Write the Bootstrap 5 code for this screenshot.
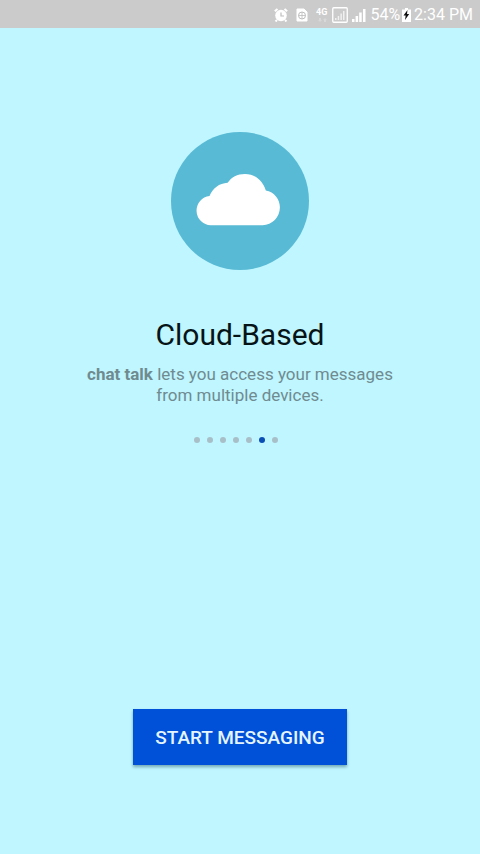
<!DOCTYPE html>
<html lang="en">
<head>
<meta charset="utf-8">
<meta name="viewport" content="width=device-width, initial-scale=1">
<title>Cloud-Based</title>
<link href="https://cdn.jsdelivr.net/npm/bootstrap@5.3.0/dist/css/bootstrap.min.css" rel="stylesheet">
<style>
body { background: #bff6ff; font-family: Roboto, "Liberation Sans", sans-serif; }
.status-bar { background: #cbcbcb; color: #fff; height: 28px; padding: 2px 7px 0 0; font-size: 16px; line-height: 26px; }
.status-bar svg { display: block; }
.battery { margin: 0 3px 0 2px; }
.intro { padding-top: 104px; }
.cloud-art { width: 138px; height: 138px; }
.intro-title { margin-top: 47px; font-size: 30px; line-height: 36px; color: #071417; }
.intro-text { margin-top: 11px; font-size: 17px; line-height: 21px; color: #6f8b90; max-width: 330px; }
.intro-text strong { font-weight: 700; }
.pager { margin-top: 31px; }
.pager-dot { width: 6px; height: 6px; margin-right: 7px; border-radius: 50%; background: #a9bfc8; }
.pager-dot.current { background: #0a4db5; }
.start-area { padding-bottom: 89px; }
.start-btn, .start-btn:hover { background: #0050d8; color: #e4f5ff; border: 0; border-radius: 0; padding: 17px 22px 15px; font-size: 19px; line-height: 24px; font-weight: 500; box-shadow: 0 2px 3px rgba(0, 50, 70, .4); }
</style>
</head>
<body>
<div class="min-vh-100 d-flex flex-column">
  <header class="status-bar d-flex align-items-center justify-content-end">
    <svg class="me-2" width="14" height="14" viewBox="0 0 14 14" fill="none" aria-hidden="true">
      <circle cx="7" cy="7.500" r="5.800" fill="#fff"/>
      <path d="M.8 3.300 3.500 1M10.500 1l2.700 2.300M3 12l-1.500 1.500M11 12l1.500 1.500" stroke="#fff" stroke-width="2"/>
      <path d="M7 4.500v3.500h3" stroke="#bdbdbd" stroke-width="1.200"/>
    </svg>
    <svg class="me-2" width="12" height="14" viewBox="0 0 12 14" fill="none" aria-hidden="true">
      <path d="M1 1h7l3 3v9H1z" fill="#fff" stroke="#fff" stroke-linejoin="round"/>
      <circle cx="6" cy="7.500" r="3.500" stroke="#bdbdbd"/>
      <path d="M2.500 7.500h7M6 4v7" stroke="#bdbdbd" stroke-width=".8"/>
    </svg>
    <svg class="me-1" width="12" height="16" viewBox="0 0 12 16" aria-hidden="true">
      <text x="0" y="8" font-size="9" font-weight="700" fill="#fff">4G</text>
      <path d="M3 11h2v2h1l-2 2-2-2h1zM8 15h2v-2h1l-2-2-2 2h1z" fill="#d8d8d8"/>
    </svg>
    <svg class="me-1" width="16" height="16" viewBox="0 0 16 16" aria-hidden="true">
      <rect x=".75" y=".75" width="14.500" height="14.500" rx="1" fill="none" stroke="#fff" stroke-width="1.300"/>
      <path d="M3 11h1.500v2H3zM5.700 9h1.500v4H5.700zM8.400 6.500h1.500V13H8.400zM11 4h1.500v9H11z" fill="#f0f0f0"/>
    </svg>
    <svg class="me-1" width="14" height="14" viewBox="0 0 14 14" aria-hidden="true">
      <path d="M0 11h2.500v3H0zM3.600 8h2.500v6H3.600zM7.200 4.500h2.500V14H7.200zM11 1h2.500v13H11z" fill="#fff"/>
    </svg>
    <span>54%</span>
    <svg class="battery" width="9" height="14" viewBox="0 0 9 14" aria-hidden="true">
      <path d="M3 0h3v1.500h3V14H0V1.500h3z" fill="#fff"/>
      <path d="M5.500 2 1.500 7.500h2.200L3 12l4.200-6H5z" fill="#111"/>
    </svg>
    <time>2:34 PM</time>
  </header>

  <main class="flex-grow-1 d-flex flex-column align-items-center text-center">
    <section class="intro d-flex flex-column align-items-center">
      <svg class="cloud-art" viewBox="0 0 139 139" aria-hidden="true">
        <circle cx="69.500" cy="69.500" r="69.500" fill="#58bad4"/>
        <path d="M40 93.800a14.700 14.700 0 0 1-1.200-29.300c3.200-7.800 9.700-12.800 18.200-13.300 3.800-5.800 9.800-9 17.500-9 10.200 0 18 6.700 21 16.600 8.500 1.500 14.200 8.700 14.200 17 0 10-7.800 18-17.500 18z" fill="#fff"/>
      </svg>
      <h1 class="intro-title fw-normal mb-0">Cloud-Based</h1>
      <p class="intro-text mb-0"><strong>chat talk</strong> lets you access your messages<br>from multiple devices.</p>
      <div class="pager d-flex" role="img" aria-label="Page 6 of 7">
        <span class="pager-dot"></span>
        <span class="pager-dot"></span>
        <span class="pager-dot"></span>
        <span class="pager-dot"></span>
        <span class="pager-dot"></span>
        <span class="pager-dot current"></span>
        <span class="pager-dot"></span>
      </div>
    </section>
    <div class="start-area mt-auto">
      <button type="button" class="btn start-btn">START MESSAGING</button>
    </div>
  </main>
</div>
<script src="https://cdn.jsdelivr.net/npm/bootstrap@5.3.0/dist/js/bootstrap.bundle.min.js"></script>
</body>
</html>
